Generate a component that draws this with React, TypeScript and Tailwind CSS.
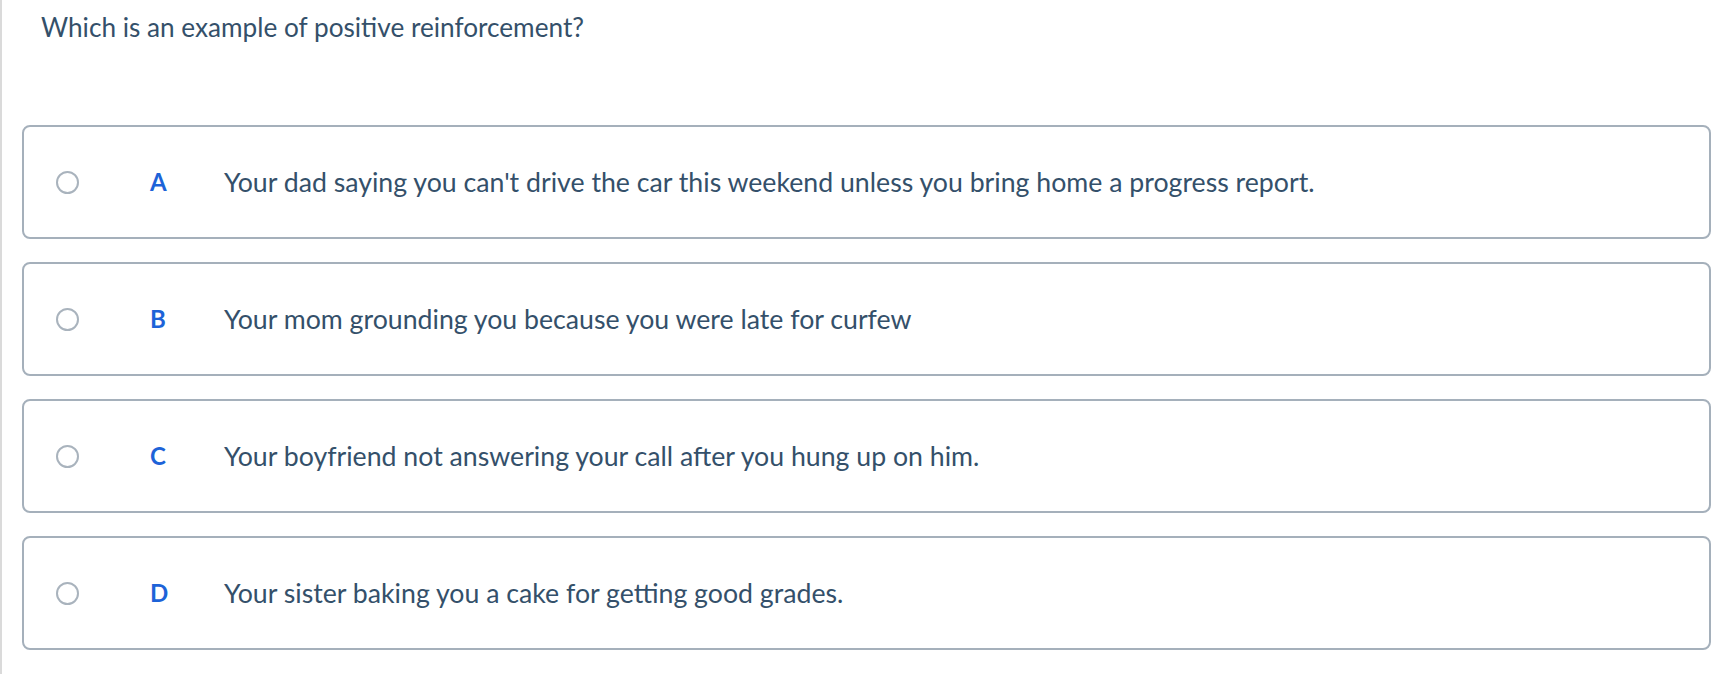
const options = [
  { letter: "A", text: "Your dad saying you can't drive the car this weekend unless you bring home a progress report." },
  { letter: "B", text: "Your mom grounding you because you were late for curfew" },
  { letter: "C", text: "Your boyfriend not answering your call after you hung up on him." },
  { letter: "D", text: "Your sister baking you a cake for getting good grades." },
];

export default function App() {
  return (
    <div
      className="min-h-[674px] w-full border-l-2 border-[#dadada] bg-white text-[#34506a]"
      style={{ fontFamily: "Lato, 'Noto Sans', sans-serif" }}
    >
      <div className="pl-[39px] pt-[11px] text-[26.2px] leading-[32px]">
        Which is an example of positive reinforcement?
      </div>
      <div className="mt-[82px] mr-[17px] ml-[20px] flex flex-col gap-[23px]">
        {options.map((o) => (
          <div
            key={o.letter}
            className="flex h-[114px] items-center rounded-[8px] border-2 border-[#a5b0bb] pl-[32px]"
          >
            <span className="h-[23px] w-[23px] shrink-0 rounded-full border-2 border-[#a9b3bd]" />
            <span className="ml-[71px] w-[74px] shrink-0 text-[24px] font-bold text-[#1d63d8]">
              {o.letter}
            </span>
            <span className="text-[26.7px]">{o.text}</span>
          </div>
        ))}
      </div>
    </div>
  );
}
